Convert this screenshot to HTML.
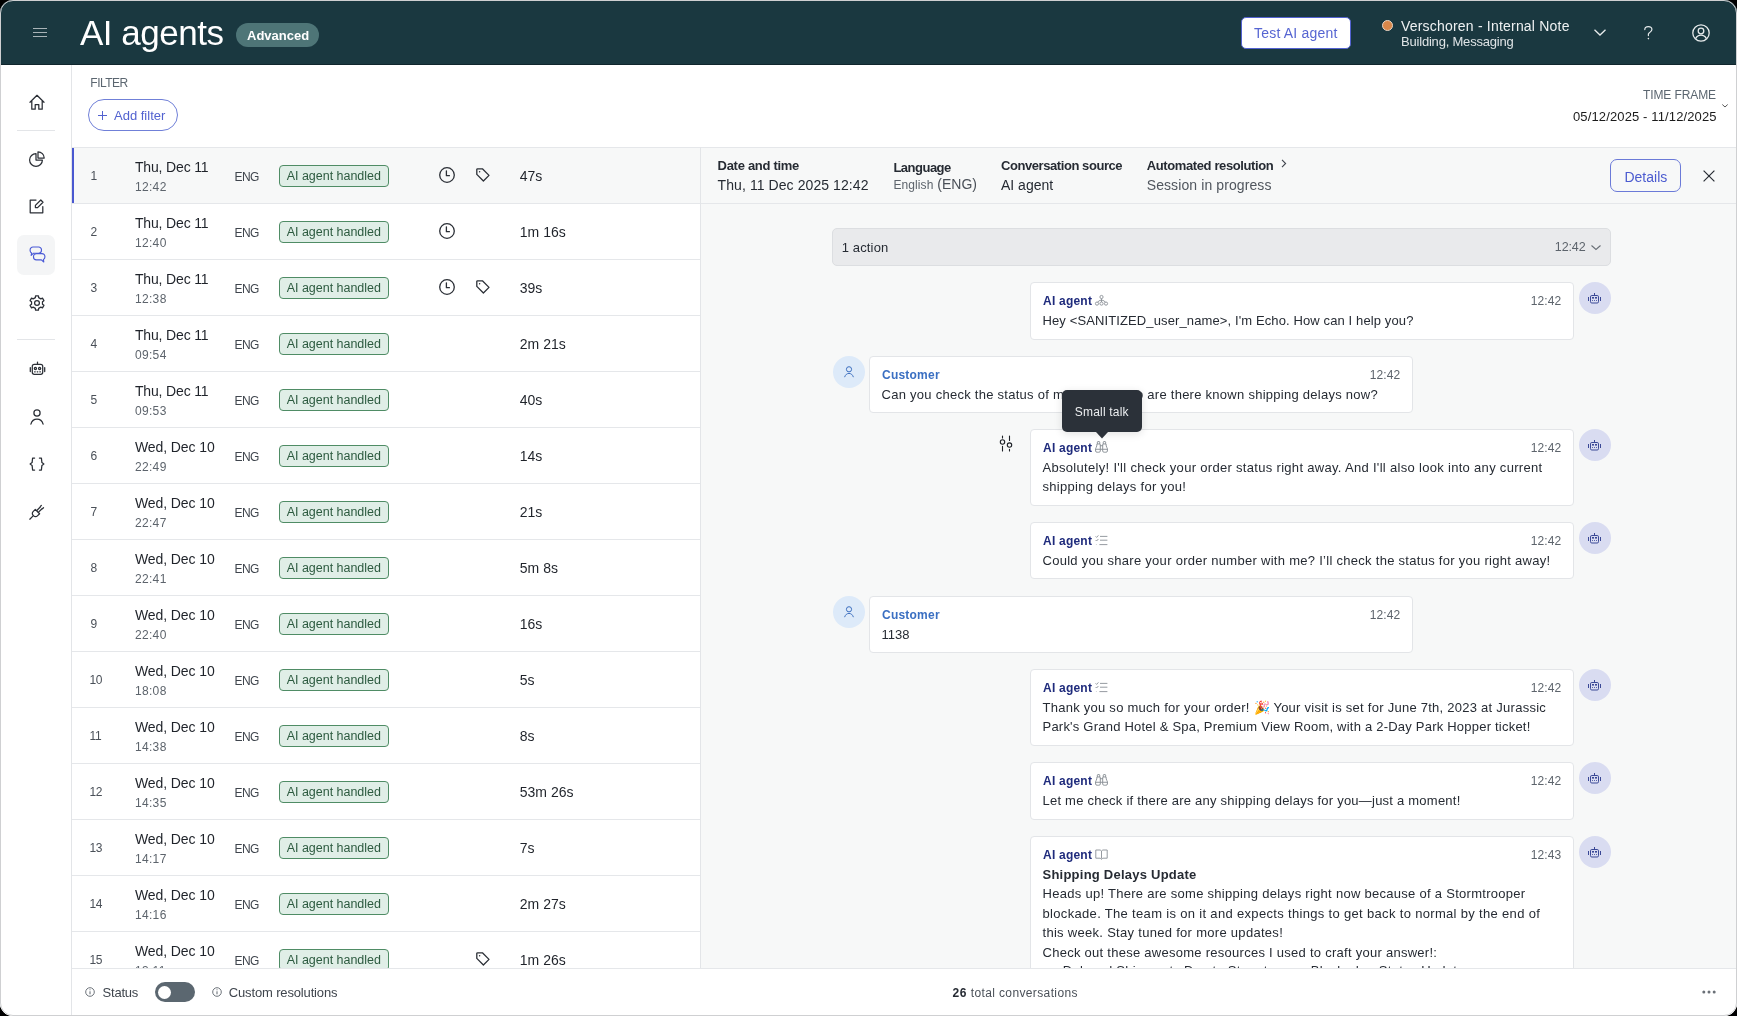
<!DOCTYPE html>
<html><head><meta charset="utf-8">
<style>
*{box-sizing:border-box;margin:0;padding:0}
html,body{width:1737px;height:1016px;background:#000;overflow:hidden}
body{font-family:"Liberation Sans",sans-serif;color:#262b33;position:relative;-webkit-font-smoothing:antialiased}
.win{will-change:transform}
.abs{position:absolute}
.win{position:absolute;left:0;top:0;width:1737px;height:1016px;border-radius:13px;overflow:hidden;background:#fff}
.frame{position:absolute;left:0;top:0;width:1737px;height:1016px;border:1px solid #cfd0d2;border-radius:13px;pointer-events:none}
.hdr{position:absolute;left:0;top:0;width:1737px;height:65px;background:#1a3840;border-bottom:1px solid #10262d}
.t{position:absolute;white-space:nowrap;line-height:1}
svg{position:absolute;overflow:visible}
.side{position:absolute;left:0;top:65px;width:72px;height:951px;background:#fff;border-right:1px solid #e3e5e8}
.sep{position:absolute;left:17px;width:38px;height:1px;background:#e3e5e8}
.row{position:absolute;left:72px;width:628px;height:57px;border-top:1px solid #e5e7ea;border-bottom:1px solid #e5e7ea}
.badge{position:absolute;left:207px;top:18px;width:110px;height:22px;border:1px solid #4d8b63;border-radius:4px;background:#e1efe8;color:#2e5c41;font-size:13px;letter-spacing:-0.25px;line-height:20px;padding-left:7px;white-space:nowrap}
.card{position:absolute;background:#fff;border:1px solid #e3e5e8;border-radius:4px}
.who{position:absolute;left:12px;top:9px;font-size:12px;font-weight:700;line-height:16px;white-space:nowrap}
.ai .who{color:#1f2b7c}
.cu .who{color:#3a6fc2}
.tm{position:absolute;right:12px;top:9px;font-size:12px;line-height:16px;color:#5d646c}
.body{position:absolute;left:12px;top:28px;right:12px;font-size:13px;line-height:19.4px;color:#262b33;letter-spacing:0.1px}
.av{position:absolute;width:32px;height:32px;border-radius:50%}
.avai{background:#d9dcf1}
.avcu{background:#ddeaf9}
</style></head>
<body>
<div class="win">
  <!-- HEADER -->
  <div class="hdr">
    <svg style="left:33px;top:28px" width="14" height="9" viewBox="0 0 14 9"><path d="M0 0.5H14M0 4.5H14M0 8.5H14" stroke="#a9b3b7" stroke-width="1"/></svg>
    <div class="t" style="left:80px;top:13.2px;font-size:35px;line-height:40px;color:#fff;letter-spacing:-0.5px">AI agents</div>
    <div class="abs" style="left:236px;top:23px;width:83px;height:24px;border-radius:12px;background:#4e7577"></div>
    <div class="t" style="left:247px;top:28px;font-size:13px;line-height:16px;font-weight:700;color:#fff">Advanced</div>
    <div class="abs" style="left:1241px;top:17px;width:110px;height:32px;border-radius:5px;background:#fff;border:1px solid #5262d0"></div>
    <div class="t" style="left:1254px;top:25px;font-size:14px;line-height:16px;color:#5665d2;letter-spacing:0.2px">Test AI agent</div>
    <div class="abs" style="left:1382px;top:20px;width:11px;height:11px;border-radius:50%;background:#d8874a;border:1px solid #e9d6c6"></div>
    <div class="t" style="left:1401px;top:18px;font-size:14px;line-height:16px;color:#eef1f2;letter-spacing:0.2px">Verschoren - Internal Note</div>
    <div class="t" style="left:1401px;top:34px;font-size:13px;line-height:16px;color:#dfe4e6;letter-spacing:-0.2px">Building, Messaging</div>
    <svg style="left:1594px;top:29px" width="12" height="7" viewBox="0 0 12 7"><path d="M0.5 0.8L6 6L11.5 0.8" fill="none" stroke="#e6eaeb" stroke-width="1.3"/></svg>
    <svg style="left:1644px;top:26px" width="9" height="14" viewBox="0 0 9 14"><path d="M0.8 3.6C0.8 1.8 2.4 0.6 4.3 0.6C6.3 0.6 7.9 1.8 7.9 3.6C7.9 5.6 5.2 6.2 4.4 8V9.6" fill="none" stroke="#e6eaeb" stroke-width="1.2" stroke-linecap="round"/><circle cx="4.4" cy="12.6" r="0.8" fill="#e6eaeb"/></svg>
    <svg style="left:1692px;top:24px" width="18" height="18" viewBox="0 0 18 18"><circle cx="9" cy="9" r="8.2" fill="none" stroke="#e6eaeb" stroke-width="1.3"/><circle cx="9" cy="7" r="2.8" fill="none" stroke="#e6eaeb" stroke-width="1.3"/><path d="M3.6 14.6C5 12 7 11.2 9 11.2S13 12 14.4 14.6" fill="none" stroke="#e6eaeb" stroke-width="1.3"/></svg>
  </div>

  <!-- SIDEBAR -->
  <div class="side">
  </div>
  <div class="sep" style="top:130px"></div>
<div class="sep" style="top:339px"></div>
<div class="abs" style="left:17px;top:235px;width:38px;height:40px;border-radius:7px;background:#f4f5f6"></div>
<svg style="left:29.0px;top:94.0px" width="16" height="16" viewBox="0 0 16 16"><path d="M1 8.3L8 1.3L15 8.3M2.8 6.6V15.2H6.2V10.6H9.8V15.2H13.2V6.6" fill="none" stroke="#2b2f36" stroke-width="1.25" stroke-linejoin="round" stroke-linecap="round"/></svg>
<svg style="left:29.0px;top:150.7px" width="16" height="16" viewBox="0 0 16 16"><path d="M7 2.6A6.4 6.4 0 1 0 13.4 9H7Z" fill="none" stroke="#2b2f36" stroke-width="1.25" stroke-linejoin="round" stroke-linecap="round"/><path d="M9 0.8V7H15.2A6.2 6.2 0 0 0 9 0.8Z" fill="none" stroke="#2b2f36" stroke-width="1.25" stroke-linejoin="round" stroke-linecap="round"/></svg>
<svg style="left:29.4px;top:198.4px" width="16" height="16" viewBox="0 0 16 16"><path d="M7 2H1.2V14.8H13.8V8.6" fill="none" stroke="#2b2f36" stroke-width="1.25" stroke-linejoin="round" stroke-linecap="round"/><path d="M6.4 9.6V7.4L11.8 2L14 4.2L8.6 9.6Z" fill="none" stroke="#2b2f36" stroke-width="1.25" stroke-linejoin="round" stroke-linecap="round"/></svg>
<svg style="left:28.5px;top:246.3px" width="17" height="17" viewBox="0 0 17 17"><path d="M4 1H9.6A2.9 2.9 0 0 1 12.5 3.9V4.3A2.9 2.9 0 0 1 9.6 7.2H4.6L2.2 9.4L2.6 6.9A2.9 2.9 0 0 1 1.1 4.3V3.9A2.9 2.9 0 0 1 4 1Z" fill="#f4f5f6" stroke="#4b5bd6" stroke-width="1.15" stroke-linejoin="round" stroke-linecap="round"/><path d="M7.4 7.6H13A2.9 2.9 0 0 1 15.9 10.5V10.9A2.9 2.9 0 0 1 14.4 13.5L14.8 16L12.4 13.8H7.4A2.9 2.9 0 0 1 4.5 10.9V10.5A2.9 2.9 0 0 1 7.4 7.6Z" fill="#f4f5f6" stroke="#4b5bd6" stroke-width="1.15" stroke-linejoin="round" stroke-linecap="round"/></svg>
<svg style="left:29.0px;top:295.0px" width="16" height="16" viewBox="0 0 16 16"><path d="M6.35 2.65 L6.55 0.85 L9.45 0.85 L9.65 2.65 L11.81 3.89 L13.47 3.17 L14.92 5.68 L13.46 6.76 L13.46 9.24 L14.92 10.32 L13.47 12.83 L11.81 12.11 L9.65 13.35 L9.45 15.15 L6.55 15.15 L6.35 13.35 L4.19 12.11 L2.53 12.83 L1.08 10.32 L2.54 9.24 L2.54 6.76 L1.08 5.68 L2.53 3.17 L4.19 3.89Z" fill="none" stroke="#2b2f36" stroke-width="1.25" stroke-linejoin="round" stroke-linecap="round"/><circle cx="8" cy="8" r="2.4" fill="none" stroke="#2b2f36" stroke-width="1.25" stroke-linejoin="round" stroke-linecap="round"/></svg>
<svg style="left:28.5px;top:360.5px" width="17" height="15" viewBox="0 0 17 15"><path d="M8.5 1V3" fill="none" stroke="#2b2f36" stroke-width="1.25" stroke-linejoin="round" stroke-linecap="round"/><rect x="3.3" y="3.3" width="10.4" height="10" rx="2" fill="none" stroke="#2b2f36" stroke-width="1.25" stroke-linejoin="round" stroke-linecap="round"/><path d="M1.3 6.5V10.5M15.7 6.5V10.5" fill="none" stroke="#2b2f36" stroke-width="1.25" stroke-linejoin="round" stroke-linecap="round"/><circle cx="6.4" cy="7.4" r="1.1" fill="none" stroke="#2b2f36" stroke-width="1.25" stroke-linejoin="round" stroke-linecap="round"/><circle cx="10.6" cy="7.4" r="1.1" fill="none" stroke="#2b2f36" stroke-width="1.25" stroke-linejoin="round" stroke-linecap="round"/><path d="M5.6 10.8H6.2M8.2 10.8H8.8M10.8 10.8H11.4" fill="none" stroke="#2b2f36" stroke-width="1.25" stroke-linejoin="round" stroke-linecap="round"/></svg>
<svg style="left:30.0px;top:408.5px" width="14" height="16" viewBox="0 0 14 16"><circle cx="7" cy="3.9" r="3.1" fill="none" stroke="#2b2f36" stroke-width="1.25" stroke-linejoin="round" stroke-linecap="round"/><path d="M0.9 15.2C1.8 11.9 4.1 10.2 7 10.2S12.2 11.9 13.1 15.2" fill="none" stroke="#2b2f36" stroke-width="1.25" stroke-linejoin="round" stroke-linecap="round"/></svg>
<svg style="left:29.0px;top:456.7px" width="16" height="14" viewBox="0 0 16 14"><path d="M5.6 1H3.6L3.1 5.6L1.1 7L3.1 8.4L3.6 13H5.6M10.4 1H12.4L12.9 5.6L14.9 7L12.9 8.4L12.4 13H10.4" fill="none" stroke="#2b2f36" stroke-width="1.25" stroke-linejoin="round" stroke-linecap="round"/></svg>
<svg style="left:29.0px;top:504.0px" width="16" height="16" viewBox="0 0 16 16"><path d="M0.8 15.2L3.9 12.1" fill="none" stroke="#2b2f36" stroke-width="1.25" stroke-linejoin="round" stroke-linecap="round"/><path d="M6.3 5.4L10.6 9.7L8.4 11.9A2.6 2.6 0 0 1 4.7 11.9L4.1 11.3A2.6 2.6 0 0 1 4.1 7.6Z" fill="none" stroke="#2b2f36" stroke-width="1.25" stroke-linejoin="round" stroke-linecap="round"/><path d="M7.6 6.7L11.3 3M9.3 8.4L13 4.7M11.2 2.6L12.3 1.5M13.4 4.8L14.5 3.7" fill="none" stroke="#2b2f36" stroke-width="1.25" stroke-linejoin="round" stroke-linecap="round"/></svg>

  <!-- FILTER BAR -->
  <div class="t" style="left:90.3px;top:77px;font-size:12px;line-height:12px;color:#5b6670;letter-spacing:-0.5px">FILTER</div>
  <div class="abs" style="left:88px;top:99px;width:90px;height:32px;border-radius:16px;border:1px solid #7080d8"></div>
  <svg style="left:98px;top:111px" width="9" height="9" viewBox="0 0 9 9"><path d="M4.5 0V9M0 4.5H9" stroke="#5262d0" stroke-width="1"/></svg>
  <div class="t" style="left:114px;top:109px;font-size:13px;line-height:14px;color:#5262d0">Add filter</div>
  <div class="t" style="left:1643px;top:89px;font-size:12px;line-height:12px;color:#5b6670;letter-spacing:-0.1px">TIME FRAME</div>
  <div class="t" style="left:1573px;top:110px;font-size:13px;line-height:14px;color:#1b1b1b;letter-spacing:0.13px">05/12/2025 - 11/12/2025</div>
  <svg style="left:1722px;top:104px" width="6" height="4" viewBox="0 0 6 4"><path d="M0.3 0.5L3 3L5.7 0.5" fill="none" stroke="#444" stroke-width="0.9"/></svg>

  <div class="abs" style="left:72px;top:147px;width:628px;height:1px;background:#e5e7ea"></div>
<div class="abs" style="left:700px;top:147px;width:1px;height:821px;background:#e3e5e8"></div>
<div class="abs" style="left:72px;top:148px;width:628px;height:56px;background:#f7f8f8;border-bottom:1px solid #e5e7ea"></div>
<div class="abs" style="left:72px;top:148px;width:2px;height:55px;background:#4a58d0"></div>
<div class="t" style="left:90.4px;top:170.04px;font-size:12px;line-height:12px;color:#4a5058;font-weight:400;letter-spacing:0px;">1</div>
<div class="t" style="left:134.9px;top:160.05px;font-size:14px;line-height:14px;color:#1f232a;font-weight:400;letter-spacing:-0.15px;">Thu, Dec 11</div>
<div class="t" style="left:134.9px;top:180.64px;font-size:12px;line-height:12px;color:#5d646c;font-weight:400;letter-spacing:0.35px;">12:42</div>
<div class="t" style="left:234.5px;top:171.04px;font-size:12px;line-height:12px;color:#3f454d;font-weight:400;letter-spacing:-0.6px;">ENG</div>
<div class="abs" style="left:279px;top:165.2px;width:110px;height:21.5px;border:1px solid #4f8c65;border-radius:4px;background:#e0eee7"></div>
<div class="t" style="left:286.7px;top:170.42px;font-size:12.5px;line-height:12.5px;color:#2c5a3f;font-weight:400;letter-spacing:-0.02px;">AI agent handled</div>
<svg style="left:439px;top:167.4px" width="16" height="16" viewBox="0 0 16 16"><circle cx="8" cy="8" r="7.3" fill="none" stroke="#2b2f36" stroke-width="1.3"/><path d="M7.4 3.8V8.7H10.4" fill="none" stroke="#2b2f36" stroke-width="1.3" stroke-linecap="round" stroke-linejoin="round"/></svg>
<svg style="left:476px;top:168px" width="14" height="14" viewBox="0 0 14 14"><path d="M0.8 1.6A0.8 0.8 0 0 1 1.6 0.8H6.4L13 7.4L7.4 13L0.8 6.4Z" fill="none" stroke="#2b2f36" stroke-width="1.3" stroke-linejoin="round"/><circle cx="3.6" cy="3.7" r="0.75" fill="#2b2f36"/></svg>
<div class="t" style="left:519.8px;top:168.75px;font-size:14px;line-height:14px;color:#1f232a;font-weight:400;letter-spacing:0.0px;">47s</div>
<div class="abs" style="left:72px;top:204px;width:628px;height:56px;background:#fff;border-bottom:1px solid #e5e7ea"></div>
<div class="t" style="left:90.4px;top:226.04px;font-size:12px;line-height:12px;color:#4a5058;font-weight:400;letter-spacing:0px;">2</div>
<div class="t" style="left:134.9px;top:216.05px;font-size:14px;line-height:14px;color:#1f232a;font-weight:400;letter-spacing:-0.15px;">Thu, Dec 11</div>
<div class="t" style="left:134.9px;top:236.64px;font-size:12px;line-height:12px;color:#5d646c;font-weight:400;letter-spacing:0.35px;">12:40</div>
<div class="t" style="left:234.5px;top:227.04px;font-size:12px;line-height:12px;color:#3f454d;font-weight:400;letter-spacing:-0.6px;">ENG</div>
<div class="abs" style="left:279px;top:221.2px;width:110px;height:21.5px;border:1px solid #4f8c65;border-radius:4px;background:#e0eee7"></div>
<div class="t" style="left:286.7px;top:226.42px;font-size:12.5px;line-height:12.5px;color:#2c5a3f;font-weight:400;letter-spacing:-0.02px;">AI agent handled</div>
<svg style="left:439px;top:223.4px" width="16" height="16" viewBox="0 0 16 16"><circle cx="8" cy="8" r="7.3" fill="none" stroke="#2b2f36" stroke-width="1.3"/><path d="M7.4 3.8V8.7H10.4" fill="none" stroke="#2b2f36" stroke-width="1.3" stroke-linecap="round" stroke-linejoin="round"/></svg>
<div class="t" style="left:519.8px;top:224.75px;font-size:14px;line-height:14px;color:#1f232a;font-weight:400;letter-spacing:0.0px;">1m 16s</div>
<div class="abs" style="left:72px;top:260px;width:628px;height:56px;background:#fff;border-bottom:1px solid #e5e7ea"></div>
<div class="t" style="left:90.4px;top:282.04px;font-size:12px;line-height:12px;color:#4a5058;font-weight:400;letter-spacing:0px;">3</div>
<div class="t" style="left:134.9px;top:272.05px;font-size:14px;line-height:14px;color:#1f232a;font-weight:400;letter-spacing:-0.15px;">Thu, Dec 11</div>
<div class="t" style="left:134.9px;top:292.64px;font-size:12px;line-height:12px;color:#5d646c;font-weight:400;letter-spacing:0.35px;">12:38</div>
<div class="t" style="left:234.5px;top:283.04px;font-size:12px;line-height:12px;color:#3f454d;font-weight:400;letter-spacing:-0.6px;">ENG</div>
<div class="abs" style="left:279px;top:277.2px;width:110px;height:21.5px;border:1px solid #4f8c65;border-radius:4px;background:#e0eee7"></div>
<div class="t" style="left:286.7px;top:282.42px;font-size:12.5px;line-height:12.5px;color:#2c5a3f;font-weight:400;letter-spacing:-0.02px;">AI agent handled</div>
<svg style="left:439px;top:279.4px" width="16" height="16" viewBox="0 0 16 16"><circle cx="8" cy="8" r="7.3" fill="none" stroke="#2b2f36" stroke-width="1.3"/><path d="M7.4 3.8V8.7H10.4" fill="none" stroke="#2b2f36" stroke-width="1.3" stroke-linecap="round" stroke-linejoin="round"/></svg>
<svg style="left:476px;top:280px" width="14" height="14" viewBox="0 0 14 14"><path d="M0.8 1.6A0.8 0.8 0 0 1 1.6 0.8H6.4L13 7.4L7.4 13L0.8 6.4Z" fill="none" stroke="#2b2f36" stroke-width="1.3" stroke-linejoin="round"/><circle cx="3.6" cy="3.7" r="0.75" fill="#2b2f36"/></svg>
<div class="t" style="left:519.8px;top:280.75px;font-size:14px;line-height:14px;color:#1f232a;font-weight:400;letter-spacing:0.0px;">39s</div>
<div class="abs" style="left:72px;top:316px;width:628px;height:56px;background:#fff;border-bottom:1px solid #e5e7ea"></div>
<div class="t" style="left:90.4px;top:338.04px;font-size:12px;line-height:12px;color:#4a5058;font-weight:400;letter-spacing:0px;">4</div>
<div class="t" style="left:134.9px;top:328.05px;font-size:14px;line-height:14px;color:#1f232a;font-weight:400;letter-spacing:-0.15px;">Thu, Dec 11</div>
<div class="t" style="left:134.9px;top:348.64px;font-size:12px;line-height:12px;color:#5d646c;font-weight:400;letter-spacing:0.35px;">09:54</div>
<div class="t" style="left:234.5px;top:339.04px;font-size:12px;line-height:12px;color:#3f454d;font-weight:400;letter-spacing:-0.6px;">ENG</div>
<div class="abs" style="left:279px;top:333.2px;width:110px;height:21.5px;border:1px solid #4f8c65;border-radius:4px;background:#e0eee7"></div>
<div class="t" style="left:286.7px;top:338.42px;font-size:12.5px;line-height:12.5px;color:#2c5a3f;font-weight:400;letter-spacing:-0.02px;">AI agent handled</div>
<div class="t" style="left:519.8px;top:336.75px;font-size:14px;line-height:14px;color:#1f232a;font-weight:400;letter-spacing:0.0px;">2m 21s</div>
<div class="abs" style="left:72px;top:372px;width:628px;height:56px;background:#fff;border-bottom:1px solid #e5e7ea"></div>
<div class="t" style="left:90.4px;top:394.04px;font-size:12px;line-height:12px;color:#4a5058;font-weight:400;letter-spacing:0px;">5</div>
<div class="t" style="left:134.9px;top:384.05px;font-size:14px;line-height:14px;color:#1f232a;font-weight:400;letter-spacing:-0.15px;">Thu, Dec 11</div>
<div class="t" style="left:134.9px;top:404.64px;font-size:12px;line-height:12px;color:#5d646c;font-weight:400;letter-spacing:0.35px;">09:53</div>
<div class="t" style="left:234.5px;top:395.04px;font-size:12px;line-height:12px;color:#3f454d;font-weight:400;letter-spacing:-0.6px;">ENG</div>
<div class="abs" style="left:279px;top:389.2px;width:110px;height:21.5px;border:1px solid #4f8c65;border-radius:4px;background:#e0eee7"></div>
<div class="t" style="left:286.7px;top:394.42px;font-size:12.5px;line-height:12.5px;color:#2c5a3f;font-weight:400;letter-spacing:-0.02px;">AI agent handled</div>
<div class="t" style="left:519.8px;top:392.75px;font-size:14px;line-height:14px;color:#1f232a;font-weight:400;letter-spacing:0.0px;">40s</div>
<div class="abs" style="left:72px;top:428px;width:628px;height:56px;background:#fff;border-bottom:1px solid #e5e7ea"></div>
<div class="t" style="left:90.4px;top:450.04px;font-size:12px;line-height:12px;color:#4a5058;font-weight:400;letter-spacing:0px;">6</div>
<div class="t" style="left:134.9px;top:440.05px;font-size:14px;line-height:14px;color:#1f232a;font-weight:400;letter-spacing:-0.08px;">Wed, Dec 10</div>
<div class="t" style="left:134.9px;top:460.64px;font-size:12px;line-height:12px;color:#5d646c;font-weight:400;letter-spacing:0.35px;">22:49</div>
<div class="t" style="left:234.5px;top:451.04px;font-size:12px;line-height:12px;color:#3f454d;font-weight:400;letter-spacing:-0.6px;">ENG</div>
<div class="abs" style="left:279px;top:445.2px;width:110px;height:21.5px;border:1px solid #4f8c65;border-radius:4px;background:#e0eee7"></div>
<div class="t" style="left:286.7px;top:450.42px;font-size:12.5px;line-height:12.5px;color:#2c5a3f;font-weight:400;letter-spacing:-0.02px;">AI agent handled</div>
<div class="t" style="left:519.8px;top:448.75px;font-size:14px;line-height:14px;color:#1f232a;font-weight:400;letter-spacing:0.0px;">14s</div>
<div class="abs" style="left:72px;top:484px;width:628px;height:56px;background:#fff;border-bottom:1px solid #e5e7ea"></div>
<div class="t" style="left:90.4px;top:506.04px;font-size:12px;line-height:12px;color:#4a5058;font-weight:400;letter-spacing:0px;">7</div>
<div class="t" style="left:134.9px;top:496.05px;font-size:14px;line-height:14px;color:#1f232a;font-weight:400;letter-spacing:-0.08px;">Wed, Dec 10</div>
<div class="t" style="left:134.9px;top:516.64px;font-size:12px;line-height:12px;color:#5d646c;font-weight:400;letter-spacing:0.35px;">22:47</div>
<div class="t" style="left:234.5px;top:507.04px;font-size:12px;line-height:12px;color:#3f454d;font-weight:400;letter-spacing:-0.6px;">ENG</div>
<div class="abs" style="left:279px;top:501.2px;width:110px;height:21.5px;border:1px solid #4f8c65;border-radius:4px;background:#e0eee7"></div>
<div class="t" style="left:286.7px;top:506.42px;font-size:12.5px;line-height:12.5px;color:#2c5a3f;font-weight:400;letter-spacing:-0.02px;">AI agent handled</div>
<div class="t" style="left:519.8px;top:504.75px;font-size:14px;line-height:14px;color:#1f232a;font-weight:400;letter-spacing:0.0px;">21s</div>
<div class="abs" style="left:72px;top:540px;width:628px;height:56px;background:#fff;border-bottom:1px solid #e5e7ea"></div>
<div class="t" style="left:90.4px;top:562.04px;font-size:12px;line-height:12px;color:#4a5058;font-weight:400;letter-spacing:0px;">8</div>
<div class="t" style="left:134.9px;top:552.05px;font-size:14px;line-height:14px;color:#1f232a;font-weight:400;letter-spacing:-0.08px;">Wed, Dec 10</div>
<div class="t" style="left:134.9px;top:572.64px;font-size:12px;line-height:12px;color:#5d646c;font-weight:400;letter-spacing:0.35px;">22:41</div>
<div class="t" style="left:234.5px;top:563.04px;font-size:12px;line-height:12px;color:#3f454d;font-weight:400;letter-spacing:-0.6px;">ENG</div>
<div class="abs" style="left:279px;top:557.2px;width:110px;height:21.5px;border:1px solid #4f8c65;border-radius:4px;background:#e0eee7"></div>
<div class="t" style="left:286.7px;top:562.42px;font-size:12.5px;line-height:12.5px;color:#2c5a3f;font-weight:400;letter-spacing:-0.02px;">AI agent handled</div>
<div class="t" style="left:519.8px;top:560.75px;font-size:14px;line-height:14px;color:#1f232a;font-weight:400;letter-spacing:0.0px;">5m 8s</div>
<div class="abs" style="left:72px;top:596px;width:628px;height:56px;background:#fff;border-bottom:1px solid #e5e7ea"></div>
<div class="t" style="left:90.4px;top:618.04px;font-size:12px;line-height:12px;color:#4a5058;font-weight:400;letter-spacing:0px;">9</div>
<div class="t" style="left:134.9px;top:608.05px;font-size:14px;line-height:14px;color:#1f232a;font-weight:400;letter-spacing:-0.08px;">Wed, Dec 10</div>
<div class="t" style="left:134.9px;top:628.64px;font-size:12px;line-height:12px;color:#5d646c;font-weight:400;letter-spacing:0.35px;">22:40</div>
<div class="t" style="left:234.5px;top:619.04px;font-size:12px;line-height:12px;color:#3f454d;font-weight:400;letter-spacing:-0.6px;">ENG</div>
<div class="abs" style="left:279px;top:613.2px;width:110px;height:21.5px;border:1px solid #4f8c65;border-radius:4px;background:#e0eee7"></div>
<div class="t" style="left:286.7px;top:618.42px;font-size:12.5px;line-height:12.5px;color:#2c5a3f;font-weight:400;letter-spacing:-0.02px;">AI agent handled</div>
<div class="t" style="left:519.8px;top:616.75px;font-size:14px;line-height:14px;color:#1f232a;font-weight:400;letter-spacing:0.0px;">16s</div>
<div class="abs" style="left:72px;top:652px;width:628px;height:56px;background:#fff;border-bottom:1px solid #e5e7ea"></div>
<div class="t" style="left:89.5px;top:674.04px;font-size:12px;line-height:12px;color:#4a5058;font-weight:400;letter-spacing:-0.3px;">10</div>
<div class="t" style="left:134.9px;top:664.05px;font-size:14px;line-height:14px;color:#1f232a;font-weight:400;letter-spacing:-0.08px;">Wed, Dec 10</div>
<div class="t" style="left:134.9px;top:684.64px;font-size:12px;line-height:12px;color:#5d646c;font-weight:400;letter-spacing:0.35px;">18:08</div>
<div class="t" style="left:234.5px;top:675.04px;font-size:12px;line-height:12px;color:#3f454d;font-weight:400;letter-spacing:-0.6px;">ENG</div>
<div class="abs" style="left:279px;top:669.2px;width:110px;height:21.5px;border:1px solid #4f8c65;border-radius:4px;background:#e0eee7"></div>
<div class="t" style="left:286.7px;top:674.42px;font-size:12.5px;line-height:12.5px;color:#2c5a3f;font-weight:400;letter-spacing:-0.02px;">AI agent handled</div>
<div class="t" style="left:519.8px;top:672.75px;font-size:14px;line-height:14px;color:#1f232a;font-weight:400;letter-spacing:0.0px;">5s</div>
<div class="abs" style="left:72px;top:708px;width:628px;height:56px;background:#fff;border-bottom:1px solid #e5e7ea"></div>
<div class="t" style="left:89.5px;top:730.04px;font-size:12px;line-height:12px;color:#4a5058;font-weight:400;letter-spacing:-0.3px;">11</div>
<div class="t" style="left:134.9px;top:720.05px;font-size:14px;line-height:14px;color:#1f232a;font-weight:400;letter-spacing:-0.08px;">Wed, Dec 10</div>
<div class="t" style="left:134.9px;top:740.64px;font-size:12px;line-height:12px;color:#5d646c;font-weight:400;letter-spacing:0.35px;">14:38</div>
<div class="t" style="left:234.5px;top:731.04px;font-size:12px;line-height:12px;color:#3f454d;font-weight:400;letter-spacing:-0.6px;">ENG</div>
<div class="abs" style="left:279px;top:725.2px;width:110px;height:21.5px;border:1px solid #4f8c65;border-radius:4px;background:#e0eee7"></div>
<div class="t" style="left:286.7px;top:730.42px;font-size:12.5px;line-height:12.5px;color:#2c5a3f;font-weight:400;letter-spacing:-0.02px;">AI agent handled</div>
<div class="t" style="left:519.8px;top:728.75px;font-size:14px;line-height:14px;color:#1f232a;font-weight:400;letter-spacing:0.0px;">8s</div>
<div class="abs" style="left:72px;top:764px;width:628px;height:56px;background:#fff;border-bottom:1px solid #e5e7ea"></div>
<div class="t" style="left:89.5px;top:786.04px;font-size:12px;line-height:12px;color:#4a5058;font-weight:400;letter-spacing:-0.3px;">12</div>
<div class="t" style="left:134.9px;top:776.05px;font-size:14px;line-height:14px;color:#1f232a;font-weight:400;letter-spacing:-0.08px;">Wed, Dec 10</div>
<div class="t" style="left:134.9px;top:796.64px;font-size:12px;line-height:12px;color:#5d646c;font-weight:400;letter-spacing:0.35px;">14:35</div>
<div class="t" style="left:234.5px;top:787.04px;font-size:12px;line-height:12px;color:#3f454d;font-weight:400;letter-spacing:-0.6px;">ENG</div>
<div class="abs" style="left:279px;top:781.2px;width:110px;height:21.5px;border:1px solid #4f8c65;border-radius:4px;background:#e0eee7"></div>
<div class="t" style="left:286.7px;top:786.42px;font-size:12.5px;line-height:12.5px;color:#2c5a3f;font-weight:400;letter-spacing:-0.02px;">AI agent handled</div>
<div class="t" style="left:519.8px;top:784.75px;font-size:14px;line-height:14px;color:#1f232a;font-weight:400;letter-spacing:0.0px;">53m 26s</div>
<div class="abs" style="left:72px;top:820px;width:628px;height:56px;background:#fff;border-bottom:1px solid #e5e7ea"></div>
<div class="t" style="left:89.5px;top:842.04px;font-size:12px;line-height:12px;color:#4a5058;font-weight:400;letter-spacing:-0.3px;">13</div>
<div class="t" style="left:134.9px;top:832.05px;font-size:14px;line-height:14px;color:#1f232a;font-weight:400;letter-spacing:-0.08px;">Wed, Dec 10</div>
<div class="t" style="left:134.9px;top:852.64px;font-size:12px;line-height:12px;color:#5d646c;font-weight:400;letter-spacing:0.35px;">14:17</div>
<div class="t" style="left:234.5px;top:843.04px;font-size:12px;line-height:12px;color:#3f454d;font-weight:400;letter-spacing:-0.6px;">ENG</div>
<div class="abs" style="left:279px;top:837.2px;width:110px;height:21.5px;border:1px solid #4f8c65;border-radius:4px;background:#e0eee7"></div>
<div class="t" style="left:286.7px;top:842.42px;font-size:12.5px;line-height:12.5px;color:#2c5a3f;font-weight:400;letter-spacing:-0.02px;">AI agent handled</div>
<div class="t" style="left:519.8px;top:840.75px;font-size:14px;line-height:14px;color:#1f232a;font-weight:400;letter-spacing:0.0px;">7s</div>
<div class="abs" style="left:72px;top:876px;width:628px;height:56px;background:#fff;border-bottom:1px solid #e5e7ea"></div>
<div class="t" style="left:89.5px;top:898.04px;font-size:12px;line-height:12px;color:#4a5058;font-weight:400;letter-spacing:-0.3px;">14</div>
<div class="t" style="left:134.9px;top:888.05px;font-size:14px;line-height:14px;color:#1f232a;font-weight:400;letter-spacing:-0.08px;">Wed, Dec 10</div>
<div class="t" style="left:134.9px;top:908.64px;font-size:12px;line-height:12px;color:#5d646c;font-weight:400;letter-spacing:0.35px;">14:16</div>
<div class="t" style="left:234.5px;top:899.04px;font-size:12px;line-height:12px;color:#3f454d;font-weight:400;letter-spacing:-0.6px;">ENG</div>
<div class="abs" style="left:279px;top:893.2px;width:110px;height:21.5px;border:1px solid #4f8c65;border-radius:4px;background:#e0eee7"></div>
<div class="t" style="left:286.7px;top:898.42px;font-size:12.5px;line-height:12.5px;color:#2c5a3f;font-weight:400;letter-spacing:-0.02px;">AI agent handled</div>
<div class="t" style="left:519.8px;top:896.75px;font-size:14px;line-height:14px;color:#1f232a;font-weight:400;letter-spacing:0.0px;">2m 27s</div>
<div class="abs" style="left:72px;top:932px;width:628px;height:56px;background:#fff;border-bottom:1px solid #e5e7ea"></div>
<div class="t" style="left:89.5px;top:954.04px;font-size:12px;line-height:12px;color:#4a5058;font-weight:400;letter-spacing:-0.3px;">15</div>
<div class="t" style="left:134.9px;top:944.05px;font-size:14px;line-height:14px;color:#1f232a;font-weight:400;letter-spacing:-0.08px;">Wed, Dec 10</div>
<div class="t" style="left:134.9px;top:964.64px;font-size:12px;line-height:12px;color:#5d646c;font-weight:400;letter-spacing:0.35px;">13:11</div>
<div class="t" style="left:234.5px;top:955.04px;font-size:12px;line-height:12px;color:#3f454d;font-weight:400;letter-spacing:-0.6px;">ENG</div>
<div class="abs" style="left:279px;top:949.2px;width:110px;height:21.5px;border:1px solid #4f8c65;border-radius:4px;background:#e0eee7"></div>
<div class="t" style="left:286.7px;top:954.42px;font-size:12.5px;line-height:12.5px;color:#2c5a3f;font-weight:400;letter-spacing:-0.02px;">AI agent handled</div>
<svg style="left:476px;top:952px" width="14" height="14" viewBox="0 0 14 14"><path d="M0.8 1.6A0.8 0.8 0 0 1 1.6 0.8H6.4L13 7.4L7.4 13L0.8 6.4Z" fill="none" stroke="#2b2f36" stroke-width="1.3" stroke-linejoin="round"/><circle cx="3.6" cy="3.7" r="0.75" fill="#2b2f36"/></svg>
<div class="t" style="left:519.8px;top:952.75px;font-size:14px;line-height:14px;color:#1f232a;font-weight:400;letter-spacing:0.0px;">1m 26s</div>

  <div class="abs" style="left:701px;top:147px;width:1036px;height:821px;background:#f7f8f8"></div>
<div class="abs" style="left:701px;top:147px;width:1036px;height:1px;background:#e5e7ea"></div>
<div class="abs" style="left:701px;top:203px;width:1036px;height:1px;background:#e5e7ea"></div>
<div class="t" style="left:717.6px;top:158.90px;font-size:13px;line-height:13px;color:#262b33;font-weight:700;letter-spacing:-0.3px;">Date and time</div>
<div class="t" style="left:717.6px;top:177.85px;font-size:14px;line-height:14px;color:#262b33;font-weight:400;letter-spacing:0.08px;">Thu, 11 Dec 2025 12:42</div>
<div class="t" style="left:893.4px;top:161.10px;font-size:13px;line-height:13px;color:#262b33;font-weight:700;letter-spacing:-0.5px;">Language</div>
<div class="t" style="left:893.4px;top:177.05px;font-size:14px;line-height:14px;color:#4a5058;font-weight:400;letter-spacing:0px;"><span style="font-size:12px;color:#5d646c;letter-spacing:0.1px">English</span> <span style="letter-spacing:0px">(ENG)</span></div>
<div class="t" style="left:1001px;top:158.80px;font-size:13px;line-height:13px;color:#262b33;font-weight:700;letter-spacing:-0.43px;">Conversation source</div>
<div class="t" style="left:1001px;top:178.45px;font-size:14px;line-height:14px;color:#262b33;font-weight:400;letter-spacing:0px;">AI agent</div>
<div class="t" style="left:1146.7px;top:158.80px;font-size:13px;line-height:13px;color:#262b33;font-weight:700;letter-spacing:-0.38px;">Automated resolution</div>
<svg style="left:1281px;top:159px" width="6" height="9" viewBox="0 0 6 9"><path d="M1 0.8L4.6 4.5L1 8.2" fill="none" stroke="#3f454d" stroke-width="1.1"/></svg>
<div class="t" style="left:1146.7px;top:178.45px;font-size:14px;line-height:14px;color:#50565e;font-weight:400;letter-spacing:0.1px;">Session in progress</div>
<div class="abs" style="left:1610px;top:159px;width:71px;height:33px;border-radius:7px;border:1.6px solid #6b7ad8"></div>
<div class="t" style="left:1624.4px;top:170.05px;font-size:14px;line-height:14px;color:#4b5bd0;font-weight:400;letter-spacing:0.03px;">Details</div>
<svg style="left:1703px;top:170px" width="12" height="12" viewBox="0 0 12 12"><path d="M0.6 0.6L11.4 11.4M11.4 0.6L0.6 11.4" stroke="#2b2f36" stroke-width="1.2"/></svg>
<div class="abs" style="left:832px;top:228px;width:779px;height:38px;border-radius:5px;border:1px solid #dcdee1;background:#e9eaec"></div>
<div class="t" style="left:841.7px;top:241.00px;font-size:13px;line-height:13px;color:#262b33;font-weight:400;letter-spacing:0.15px;">1 action</div>
<div class="t" style="left:1554.8px;top:241.42px;font-size:12.5px;line-height:12.5px;color:#5d646c;font-weight:400;letter-spacing:-0.1px;">12:42</div>
<svg style="left:1591px;top:244.5px" width="10" height="5" viewBox="0 0 10 5"><path d="M0.5 0.5L5 4.5L9.5 0.5" fill="none" stroke="#6a7077" stroke-width="1.1"/></svg>
<div class="card" style="left:1030px;top:282px;width:544px;height:58px"></div>
<div class="av avai" style="left:1578.5px;top:282px"></div><svg style="left:1588px;top:293px" width="13" height="11" viewBox="0 0 13 11"><rect x="6" y="0" width="1" height="2" fill="#3a4896"/><rect x="2.5" y="2.5" width="8" height="7.5" rx="1.3" fill="none" stroke="#3a4896" stroke-width="1"/><path d="M0.5 4V8M12.5 4V8" stroke="#3a4896" stroke-width="1"/><rect x="4" y="4" width="2" height="1.6" fill="#3a4896"/><rect x="7" y="4" width="2" height="1.6" fill="#3a4896"/><rect x="4" y="7" width="1" height="1" fill="#3a4896" opacity="0.8"/><rect x="6" y="7" width="1" height="1" fill="#3a4896" opacity="0.8"/><rect x="8" y="7" width="1" height="1" fill="#3a4896" opacity="0.8"/></svg>
<div class="t" style="left:1043px;top:294.54px;font-size:12px;line-height:12px;color:#1f2b7c;font-weight:700;letter-spacing:0.22px;">AI agent</div>
<svg style="left:1095px;top:295px" width="13" height="11" viewBox="0 0 13 11"><circle cx="6.5" cy="2" r="1.6" fill="none" stroke="#8a9096" stroke-width="0.9"/><circle cx="2" cy="8.6" r="1.6" fill="none" stroke="#8a9096" stroke-width="0.9"/><circle cx="6.5" cy="8.6" r="1.6" fill="none" stroke="#8a9096" stroke-width="0.9"/><circle cx="11" cy="8.6" r="1.6" fill="none" stroke="#8a9096" stroke-width="0.9"/><path d="M6.5 3.6V7M2.6 7L5 5.3H8L10.4 7" fill="none" stroke="#8a9096" stroke-width="0.9"/></svg>
<div class="t" style="left:1530.7px;top:294.54px;font-size:12px;line-height:12px;color:#5d646c;font-weight:400;letter-spacing:0.1px;">12:42</div>
<div class="t" style="left:1042.5px;top:314.00px;font-size:13px;line-height:13px;color:#262b33;font-weight:400;letter-spacing:0.116px;">Hey &lt;SANITIZED_user_name&gt;, I'm Echo. How can I help you?</div>
<div class="card" style="left:869px;top:356px;width:544px;height:57px"></div>
<div class="av avcu" style="left:832.5px;top:355.5px"></div><svg style="left:843.5px;top:365.5px" width="10" height="12" viewBox="0 0 10 12"><circle cx="5" cy="3.3" r="2.6" fill="none" stroke="#3e70c0" stroke-width="1"/><path d="M0.7 10.8C1.5 8.6 3 7.4 5 7.4S8.5 8.6 9.3 10.8" fill="none" stroke="#3e70c0" stroke-width="1" stroke-linecap="round"/></svg>
<div class="t" style="left:882px;top:368.54px;font-size:12px;line-height:12px;color:#3a6fc2;font-weight:700;letter-spacing:0.22px;">Customer</div>
<div class="t" style="left:1369.7px;top:368.54px;font-size:12px;line-height:12px;color:#5d646c;font-weight:400;letter-spacing:0.1px;">12:42</div>
<div class="t" style="left:881.5px;top:388.00px;font-size:13px;line-height:13px;color:#262b33;font-weight:400;letter-spacing:0.266px;">Can you check the status of my order? Also are there known shipping delays now?</div>
<div class="card" style="left:1030px;top:429px;width:544px;height:77px"></div>
<div class="av avai" style="left:1578.5px;top:429px"></div><svg style="left:1588px;top:440px" width="13" height="11" viewBox="0 0 13 11"><rect x="6" y="0" width="1" height="2" fill="#3a4896"/><rect x="2.5" y="2.5" width="8" height="7.5" rx="1.3" fill="none" stroke="#3a4896" stroke-width="1"/><path d="M0.5 4V8M12.5 4V8" stroke="#3a4896" stroke-width="1"/><rect x="4" y="4" width="2" height="1.6" fill="#3a4896"/><rect x="7" y="4" width="2" height="1.6" fill="#3a4896"/><rect x="4" y="7" width="1" height="1" fill="#3a4896" opacity="0.8"/><rect x="6" y="7" width="1" height="1" fill="#3a4896" opacity="0.8"/><rect x="8" y="7" width="1" height="1" fill="#3a4896" opacity="0.8"/></svg>
<div class="t" style="left:1043px;top:441.54px;font-size:12px;line-height:12px;color:#1f2b7c;font-weight:700;letter-spacing:0.22px;">AI agent</div>
<svg style="left:1095px;top:440.5px" width="13" height="12" viewBox="1 2 22 20.3"><g fill="none" stroke="#8a9096" stroke-width="1.6" stroke-linejoin="round" stroke-linecap="round"><path d="M10 10h4"/><path d="M19 7V4a1 1 0 0 0-1-1h-2a1 1 0 0 0-1 1v3"/><path d="M20 21a2 2 0 0 0 2-2v-3.851c0-1.39-2-2.962-2-4.829V8a1 1 0 0 0-1-1h-4a1 1 0 0 0-1 1v11a2 2 0 0 0 2 2z"/><path d="M22 16L2 16"/><path d="M4 21a2 2 0 0 1-2-2v-3.851c0-1.39 2-2.962 2-4.829V8a1 1 0 0 1 1-1h4a1 1 0 0 1 1 1v11a2 2 0 0 1-2 2z"/><path d="M9 7V4a1 1 0 0 0-1-1H6a1 1 0 0 0-1 1v3"/></g></svg>
<div class="t" style="left:1530.7px;top:441.54px;font-size:12px;line-height:12px;color:#5d646c;font-weight:400;letter-spacing:0.1px;">12:42</div>
<div class="t" style="left:1042.5px;top:461.00px;font-size:13px;line-height:13px;color:#262b33;font-weight:400;letter-spacing:0.307px;">Absolutely! I'll check your order status right away. And I'll also look into any current</div>
<div class="t" style="left:1042.5px;top:480.40px;font-size:13px;line-height:13px;color:#262b33;font-weight:400;letter-spacing:0.3px;">shipping delays for you!</div>
<div class="card" style="left:1030px;top:522px;width:544px;height:57px"></div>
<div class="av avai" style="left:1578.5px;top:522px"></div><svg style="left:1588px;top:533px" width="13" height="11" viewBox="0 0 13 11"><rect x="6" y="0" width="1" height="2" fill="#3a4896"/><rect x="2.5" y="2.5" width="8" height="7.5" rx="1.3" fill="none" stroke="#3a4896" stroke-width="1"/><path d="M0.5 4V8M12.5 4V8" stroke="#3a4896" stroke-width="1"/><rect x="4" y="4" width="2" height="1.6" fill="#3a4896"/><rect x="7" y="4" width="2" height="1.6" fill="#3a4896"/><rect x="4" y="7" width="1" height="1" fill="#3a4896" opacity="0.8"/><rect x="6" y="7" width="1" height="1" fill="#3a4896" opacity="0.8"/><rect x="8" y="7" width="1" height="1" fill="#3a4896" opacity="0.8"/></svg>
<div class="t" style="left:1043px;top:534.54px;font-size:12px;line-height:12px;color:#1f2b7c;font-weight:700;letter-spacing:0.22px;">AI agent</div>
<svg style="left:1095px;top:535px" width="13" height="11" viewBox="0 0 13 11"><path d="M0.6 1.4L1.6 2.4L3.4 0.4M0.6 5L1.6 6L3.4 4M1.4 9.6V10" fill="none" stroke="#8a9096" stroke-width="0.9"/><path d="M5 1.4H12.4M5 5.2H12.4M4.4 9.6H12.4" fill="none" stroke="#8a9096" stroke-width="0.9"/></svg>
<div class="t" style="left:1530.7px;top:534.54px;font-size:12px;line-height:12px;color:#5d646c;font-weight:400;letter-spacing:0.1px;">12:42</div>
<div class="t" style="left:1042.5px;top:554.00px;font-size:13px;line-height:13px;color:#262b33;font-weight:400;letter-spacing:0.284px;">Could you share your order number with me? I’ll check the status for you right away!</div>
<div class="card" style="left:869px;top:596px;width:544px;height:57px"></div>
<div class="av avcu" style="left:832.5px;top:595.5px"></div><svg style="left:843.5px;top:605.5px" width="10" height="12" viewBox="0 0 10 12"><circle cx="5" cy="3.3" r="2.6" fill="none" stroke="#3e70c0" stroke-width="1"/><path d="M0.7 10.8C1.5 8.6 3 7.4 5 7.4S8.5 8.6 9.3 10.8" fill="none" stroke="#3e70c0" stroke-width="1" stroke-linecap="round"/></svg>
<div class="t" style="left:882px;top:608.54px;font-size:12px;line-height:12px;color:#3a6fc2;font-weight:700;letter-spacing:0.22px;">Customer</div>
<div class="t" style="left:1369.7px;top:608.54px;font-size:12px;line-height:12px;color:#5d646c;font-weight:400;letter-spacing:0.1px;">12:42</div>
<div class="t" style="left:881.5px;top:628.00px;font-size:13px;line-height:13px;color:#262b33;font-weight:400;letter-spacing:0.0px;">1138</div>
<div class="card" style="left:1030px;top:669px;width:544px;height:77px"></div>
<div class="av avai" style="left:1578.5px;top:669px"></div><svg style="left:1588px;top:680px" width="13" height="11" viewBox="0 0 13 11"><rect x="6" y="0" width="1" height="2" fill="#3a4896"/><rect x="2.5" y="2.5" width="8" height="7.5" rx="1.3" fill="none" stroke="#3a4896" stroke-width="1"/><path d="M0.5 4V8M12.5 4V8" stroke="#3a4896" stroke-width="1"/><rect x="4" y="4" width="2" height="1.6" fill="#3a4896"/><rect x="7" y="4" width="2" height="1.6" fill="#3a4896"/><rect x="4" y="7" width="1" height="1" fill="#3a4896" opacity="0.8"/><rect x="6" y="7" width="1" height="1" fill="#3a4896" opacity="0.8"/><rect x="8" y="7" width="1" height="1" fill="#3a4896" opacity="0.8"/></svg>
<div class="t" style="left:1043px;top:681.54px;font-size:12px;line-height:12px;color:#1f2b7c;font-weight:700;letter-spacing:0.22px;">AI agent</div>
<svg style="left:1095px;top:682px" width="13" height="11" viewBox="0 0 13 11"><path d="M0.6 1.4L1.6 2.4L3.4 0.4M0.6 5L1.6 6L3.4 4M1.4 9.6V10" fill="none" stroke="#8a9096" stroke-width="0.9"/><path d="M5 1.4H12.4M5 5.2H12.4M4.4 9.6H12.4" fill="none" stroke="#8a9096" stroke-width="0.9"/></svg>
<div class="t" style="left:1530.7px;top:681.54px;font-size:12px;line-height:12px;color:#5d646c;font-weight:400;letter-spacing:0.1px;">12:42</div>
<div class="t" style="left:1042.5px;top:701.00px;font-size:13px;line-height:13px;color:#262b33;font-weight:400;letter-spacing:0.256px;">Thank you so much for your order! 🎉 Your visit is set for June 7th, 2023 at Jurassic</div>
<div class="t" style="left:1042.5px;top:720.40px;font-size:13px;line-height:13px;color:#262b33;font-weight:400;letter-spacing:0.219px;">Park's Grand Hotel &amp; Spa, Premium View Room, with a 2-Day Park Hopper ticket!</div>
<div class="card" style="left:1030px;top:762px;width:544px;height:58px"></div>
<div class="av avai" style="left:1578.5px;top:762px"></div><svg style="left:1588px;top:773px" width="13" height="11" viewBox="0 0 13 11"><rect x="6" y="0" width="1" height="2" fill="#3a4896"/><rect x="2.5" y="2.5" width="8" height="7.5" rx="1.3" fill="none" stroke="#3a4896" stroke-width="1"/><path d="M0.5 4V8M12.5 4V8" stroke="#3a4896" stroke-width="1"/><rect x="4" y="4" width="2" height="1.6" fill="#3a4896"/><rect x="7" y="4" width="2" height="1.6" fill="#3a4896"/><rect x="4" y="7" width="1" height="1" fill="#3a4896" opacity="0.8"/><rect x="6" y="7" width="1" height="1" fill="#3a4896" opacity="0.8"/><rect x="8" y="7" width="1" height="1" fill="#3a4896" opacity="0.8"/></svg>
<div class="t" style="left:1043px;top:774.54px;font-size:12px;line-height:12px;color:#1f2b7c;font-weight:700;letter-spacing:0.22px;">AI agent</div>
<svg style="left:1095px;top:773.5px" width="13" height="12" viewBox="1 2 22 20.3"><g fill="none" stroke="#8a9096" stroke-width="1.6" stroke-linejoin="round" stroke-linecap="round"><path d="M10 10h4"/><path d="M19 7V4a1 1 0 0 0-1-1h-2a1 1 0 0 0-1 1v3"/><path d="M20 21a2 2 0 0 0 2-2v-3.851c0-1.39-2-2.962-2-4.829V8a1 1 0 0 0-1-1h-4a1 1 0 0 0-1 1v11a2 2 0 0 0 2 2z"/><path d="M22 16L2 16"/><path d="M4 21a2 2 0 0 1-2-2v-3.851c0-1.39 2-2.962 2-4.829V8a1 1 0 0 1 1-1h4a1 1 0 0 1 1 1v11a2 2 0 0 1-2 2z"/><path d="M9 7V4a1 1 0 0 0-1-1H6a1 1 0 0 0-1 1v3"/></g></svg>
<div class="t" style="left:1530.7px;top:774.54px;font-size:12px;line-height:12px;color:#5d646c;font-weight:400;letter-spacing:0.1px;">12:42</div>
<div class="t" style="left:1042.5px;top:794.00px;font-size:13px;line-height:13px;color:#262b33;font-weight:400;letter-spacing:0.228px;">Let me check if there are any shipping delays for you—just a moment!</div>
<div class="card" style="left:1030px;top:836px;width:544px;height:200px"></div>
<div class="av avai" style="left:1578.5px;top:836px"></div><svg style="left:1588px;top:847px" width="13" height="11" viewBox="0 0 13 11"><rect x="6" y="0" width="1" height="2" fill="#3a4896"/><rect x="2.5" y="2.5" width="8" height="7.5" rx="1.3" fill="none" stroke="#3a4896" stroke-width="1"/><path d="M0.5 4V8M12.5 4V8" stroke="#3a4896" stroke-width="1"/><rect x="4" y="4" width="2" height="1.6" fill="#3a4896"/><rect x="7" y="4" width="2" height="1.6" fill="#3a4896"/><rect x="4" y="7" width="1" height="1" fill="#3a4896" opacity="0.8"/><rect x="6" y="7" width="1" height="1" fill="#3a4896" opacity="0.8"/><rect x="8" y="7" width="1" height="1" fill="#3a4896" opacity="0.8"/></svg>
<div class="t" style="left:1043px;top:848.54px;font-size:12px;line-height:12px;color:#1f2b7c;font-weight:700;letter-spacing:0.22px;">AI agent</div>
<svg style="left:1095px;top:849px" width="13" height="11" viewBox="0 0 13 11"><path d="M0.8 1V9.2H5.2L6.5 10.3L7.8 9.2H12.2V1H7.8L6.5 2L5.2 1Z M6.5 2V9.6" fill="none" stroke="#8a9096" stroke-width="0.9" stroke-linejoin="round"/></svg>
<div class="t" style="left:1530.7px;top:848.54px;font-size:12px;line-height:12px;color:#5d646c;font-weight:400;letter-spacing:0.1px;">12:43</div>
<div class="t" style="left:1042.5px;top:868.00px;font-size:13px;line-height:13px;color:#262b33;font-weight:700;letter-spacing:0.236px;">Shipping Delays Update</div>
<div class="t" style="left:1042.5px;top:887.40px;font-size:13px;line-height:13px;color:#262b33;font-weight:400;letter-spacing:0.282px;">Heads up! There are some shipping delays right now because of a Stormtrooper</div>
<div class="t" style="left:1042.5px;top:906.80px;font-size:13px;line-height:13px;color:#262b33;font-weight:400;letter-spacing:0.326px;">blockade. The team is on it and expects things to get back to normal by the end of</div>
<div class="t" style="left:1042.5px;top:926.20px;font-size:13px;line-height:13px;color:#262b33;font-weight:400;letter-spacing:0.295px;">this week. Stay tuned for more updates!</div>
<div class="t" style="left:1042.5px;top:945.60px;font-size:13px;line-height:13px;color:#262b33;font-weight:400;letter-spacing:0.267px;">Check out these awesome resources I used to craft your answer!:</div>
<div class="t" style="left:1042.5px;top:965.00px;font-size:13px;line-height:13px;color:#262b33;font-weight:400;letter-spacing:0.27px;"><span style="position:relative;top:-1.5px">&nbsp;&nbsp;•&nbsp; Delayed Shipments Due to Stormtrooper Blockade - Status Update</span></div>
<svg style="left:999px;top:435px" width="14" height="17" viewBox="0 0 14 17"><path d="M3.5 1.1V2.9M3.5 11.2V16M10.5 1.1V5.5M10.5 14.3V16" stroke="#1d2127" stroke-width="1.1" stroke-linecap="round"/><circle cx="3.5" cy="7" r="2.2" fill="none" stroke="#1d2127" stroke-width="1.1"/><circle cx="10.5" cy="10.1" r="2.2" fill="none" stroke="#1d2127" stroke-width="1.1"/></svg>
<div class="abs" style="left:1062px;top:390px;width:80px;height:42px;border-radius:5px;background:#2b3139;box-shadow:0 2px 8px rgba(0,0,0,0.12)"></div>
<svg style="left:1095.5px;top:431.5px" width="12" height="7" viewBox="0 0 12 7"><path d="M0 0H12L6 6.5Z" fill="#2b3139"/></svg>
<div class="t" style="left:1074.8px;top:405.54px;font-size:12px;line-height:12px;color:#eceef0;font-weight:400;letter-spacing:0.2px;">Small talk</div>

  <div class="abs" style="left:72px;top:968px;width:1665px;height:48px;background:#fff;border-top:1px solid #e5e7ea"></div>
<div class="abs" style="left:71px;top:969px;width:1px;height:47px;background:#e3e5e8"></div>
<svg style="left:85px;top:987.4px" width="10" height="10" viewBox="0 0 10 10"><circle cx="5" cy="5" r="4.3" fill="none" stroke="#5d646c" stroke-width="0.9"/><path d="M5 4.3V7.3" stroke="#5d646c" stroke-width="1"/><circle cx="5" cy="2.8" r="0.55" fill="#5d646c"/></svg>
<div class="t" style="left:102.6px;top:986.30px;font-size:13px;line-height:13px;color:#3f454d;font-weight:400;letter-spacing:-0.22px;">Status</div>
<div class="abs" style="left:154.5px;top:982.2px;width:40px;height:20px;border-radius:10px;background:#5b6770"></div>
<div class="abs" style="left:158px;top:986px;width:13px;height:13px;border-radius:50%;background:#fff"></div>
<svg style="left:211.6px;top:987.4px" width="10" height="10" viewBox="0 0 10 10"><circle cx="5" cy="5" r="4.3" fill="none" stroke="#5d646c" stroke-width="0.9"/><path d="M5 4.3V7.3" stroke="#5d646c" stroke-width="1"/><circle cx="5" cy="2.8" r="0.55" fill="#5d646c"/></svg>
<div class="t" style="left:228.8px;top:986.30px;font-size:13px;line-height:13px;color:#3f454d;font-weight:400;letter-spacing:-0.15px;">Custom resolutions</div>
<div class="t" style="left:952.5px;top:986.64px;font-size:12px;line-height:12px;color:#4a5058;font-weight:400;letter-spacing:0.37px;"><b style="color:#262b33;letter-spacing:0.6px">26</b> total conversations</div>
<svg style="left:1702px;top:990px" width="14" height="4" viewBox="0 0 14 4"><circle cx="1.8" cy="2" r="1.5" fill="#6a7077"/><circle cx="7" cy="2" r="1.5" fill="#6a7077"/><circle cx="12.2" cy="2" r="1.5" fill="#6a7077"/></svg>
</div>
<div class="frame"></div>
</body></html>
